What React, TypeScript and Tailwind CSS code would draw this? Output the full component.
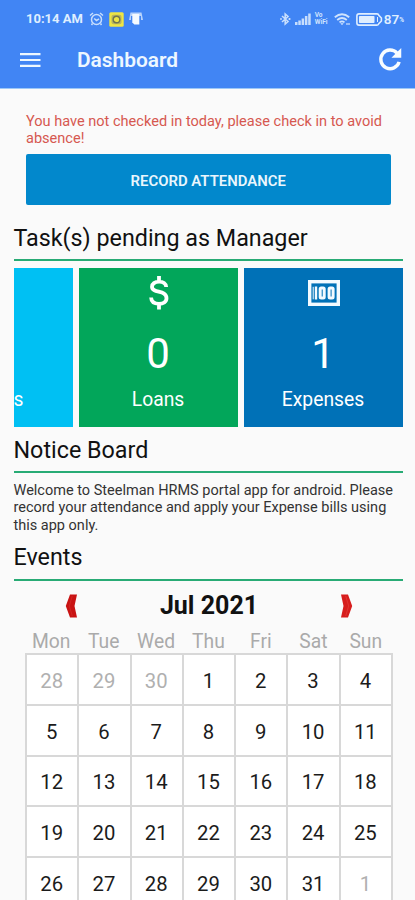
import type { ReactNode } from "react";

const days = ["Mon", "Tue", "Wed", "Thu", "Fri", "Sat", "Sun"];
const dates = [
  28, 29, 30, 1, 2, 3, 4, 5, 6, 7, 8, 9, 10, 11, 12, 13, 14, 15, 16, 17, 18, 19,
  20, 21, 22, 23, 24, 25, 26, 27, 28, 29, 30, 31, 1,
];

function StatusBar() {
  return (
    <div className="flex h-[38px] items-center pl-[26px] pr-[11px] text-[#dfeeff]">
      <span className="w-[58px] whitespace-nowrap text-[13px] font-bold">10:14 AM</span>
      <svg className="ml-[5px]" width="15" height="14" viewBox="0 0 15 14" fill="none" stroke="currentColor" strokeWidth="1.5" opacity=".85">
        <circle cx="7.5" cy="7.5" r="5" />
        <path d="M1 3.5 4 1M14 3.5 11 1M5.2 6.5 7.5 8.6 10 6.8M3.5 11.5 2.5 13M11.5 11.5l1 1.5" />
      </svg>
      <svg className="ml-[5px]" width="15" height="15" viewBox="0 0 15 15" fill="none">
        <rect x=".3" y=".3" width="14.4" height="14.4" rx="1.5" fill="#eee544" />
        <rect x="2.5" y="2.8" width="10" height="9.5" rx="2" fill="#b9b65d" />
        <circle cx="7.5" cy="7.5" r="3.3" fill="#eee544" stroke="#71764f" strokeWidth="1.4" />
      </svg>
      <svg className="ml-[5px]" width="14" height="14" viewBox="0 0 14 14" fill="currentColor">
        <path d="M1.5.5h11L14 8h-2V4H2v4H0Z" opacity=".75" />
        <path d="M3.3 2h7v10.500H5.3l-2-2Z" fill="#f4faff" />
      </svg>
      <div className="ml-auto flex items-center">
        <svg width="11" height="14" viewBox="0 0 11 14" fill="none" stroke="currentColor" strokeWidth="1.6" opacity=".85">
          <path d="m2 4 6 5.5L5.2 12V2L8 4.5 2 10" />
          <path d="M.3 7h1.4M8.6 7H10.4" strokeWidth="1.8" />
        </svg>
        <svg className="ml-[4px]" width="16" height="12" viewBox="0 0 16 12" fill="currentColor" opacity=".85">
          <path d="M0 9h2.5v3H0zM3.3 7.5h2.5V12H3.3zM6.6 5.5h2.5V12H6.6zM9.9 3h2.5v9H9.9zM13.2.5h2.5V12h-2.5z" />
        </svg>
        <span className="ml-[4px] flex w-[15px] flex-col whitespace-nowrap text-[6.5px] font-bold leading-[7px] opacity-90">
          <span>Vo</span>
          <span>WiFi</span>
        </span>
        <svg className="ml-[4px]" width="17" height="13" viewBox="0 0 17 13" fill="none" stroke="currentColor" strokeWidth="1.8" opacity=".9">
          <path d="M.8 4.3Q8 -1.8 15.2 4.3M3.2 7Q8 2.9 12.8 7M5.5 9.4Q8 7.4 10.5 9.4" />
          <path d="m6.3 10.3 1.7 2 1.7-2Z" fill="currentColor" stroke="none" />
          <path d="M13 10v2M15 10v2" strokeWidth="1.2" />
        </svg>
        <svg className="ml-[5px]" width="27" height="13" viewBox="0 0 27 13" fill="none">
          <path d="M3 .9h18q1.5 0 1.8 1.5l2.6 2.6v3l-2.6 2.6q-.3 1.5-1.8 1.5H3Q.9 12.1.9 10V3Q.9.9 3 .9Z" stroke="currentColor" strokeWidth="1.6" />
          <rect x="3" y="3" width="15.5" height="7" rx=".8" fill="currentColor" />
          <path d="M21.5 4v5" stroke="currentColor" strokeWidth="1" />
        </svg>
        <span className="ml-[1px] text-[13.5px] font-semibold">87</span>
        <span className="mt-[4px] text-[6.5px] font-bold">%</span>
      </div>
    </div>
  );
}

function SectionTitle({ children, className }: { children: ReactNode; className: string }) {
  return (
    <h2 className={`border-b-2 border-[#28ab75] text-[23.3px] leading-[29px] text-[#111] ${className}`}>
      {children}
    </h2>
  );
}

function Tile({ color, icon, count, label }: { color: string; icon: ReactNode; count: string; label: string }) {
  return (
    <div className={`flex h-[159px] w-[159px] shrink-0 flex-col items-center text-white ${color}`}>
      <div className="flex h-[50px] items-center">{icon}</div>
      <div className="h-[60px] pr-px pt-[11px] text-[42px] leading-[50px]">{count}</div>
      <div className="pr-px pt-[10px] text-[19.3px] leading-[24px]">{label}</div>
    </div>
  );
}

export default function App() {
  return (
    <div className="h-[900px] w-[415px] overflow-hidden bg-[#fafafa] font-['Roboto',sans-serif]">
      <header className="h-[89px] border-b border-[#9cc8f8] bg-[#4185f4]">
        <StatusBar />
        <div className="flex h-[44px] items-center pl-[20px] pr-[13px] text-[#edf7ff]">
          <svg width="21" height="15" viewBox="0 0 21 15" stroke="currentColor" strokeWidth="2.2">
            <path d="M0 1.2h20.5M0 7h20.5M0 12.9h20.5" />
          </svg>
          <h1 className="ml-[36px] text-[20.9px] font-semibold leading-[28px]">Dashboard</h1>
          <svg className="-mt-px ml-auto" width="24" height="25" viewBox="0 0 25 26" fill="none" stroke="#f7fcff" strokeWidth="3.6">
            <path d="M19.8 6.3A9.7 9.7 0 1 0 22 15.5" />
            <path d="M24.2 1v10.2H14Z" fill="#f7fcff" stroke="none" />
          </svg>
        </div>
      </header>

      <section className="pl-[26px] pr-[24.5px] pt-[24px]">
        <p className="whitespace-nowrap text-[14.55px] leading-[17.4px] text-[#d65850]">
          You have not checked in today, please check in to avoid
          <br />
          absence!
        </p>
        <button className="mt-[6px] block h-[51px] w-full rounded-[2px] bg-[#0288cc] pt-[3px] text-[14.9px] font-semibold text-[#e9f6fd]">
          RECORD ATTENDANCE
        </button>
      </section>

      <main className="pl-[13.5px] pr-[12px]">
        <SectionTitle className="mt-[19px] h-[37px]">Task(s) pending as Manager</SectionTitle>
        <div className="mt-[7px] flex justify-end gap-[6px] overflow-hidden">
          <div className="flex h-[159px] w-[60px] shrink-0 items-end bg-[#00c0f3] pb-[15px] pl-[0.5px] text-[19.3px] leading-[24px] text-white">
            s
          </div>
          <Tile
            color="bg-[#02a65a]"
            count="0"
            label="Loans"
            icon={
              <svg width="20" height="36" viewBox="0 0 20 36" fill="none" stroke="white" strokeWidth="3.8">
                <path d="M17.2 12C17 8.5 14 6.7 10.2 6.7C5.8 6.7 3 8.7 3 11.7C3 18.8 17.5 14.5 17.5 23.3C17.5 27 14.2 28.8 10 28.8C5.6 28.8 2.3 26.8 2.1 22.5M10 1v6M10 28v6.5" />
              </svg>
            }
          />
          <Tile
            color="bg-[#0071b7]"
            count="1"
            label="Expenses"
            icon={
              <svg width="32" height="26" viewBox="0 0 32 26" fill="none" stroke="#f2faff">
                <rect x="1.7" y="1.7" width="28.6" height="22.6" strokeWidth="3.4" />
                <path d="M5.2 6.8v12.500" strokeWidth="1" />
                <path d="M8 6.500v13" strokeWidth="2.4" />
                <rect x="12.200" y="8" width="4" height="10" rx="1" strokeWidth="3" />
                <rect x="21.100" y="8" width="4" height="10" rx="1" strokeWidth="3" />
              </svg>
            }
          />
        </div>
        <SectionTitle className="mt-[9px] h-[37px]">Notice Board</SectionTitle>
        <p className="mt-[9px] whitespace-nowrap text-[14.5px] leading-[17.4px] text-[#333]">
          Welcome to Steelman HRMS portal app for android. Please
          <br />
          record your attendance and apply your Expense bills using
          <br />
          this app only.
        </p>
        <SectionTitle className="mt-[9px] h-[38px]">Events</SectionTitle>
      </main>

      <section className="pl-[25px] pr-[22px]">
        <div className="flex h-[49px] items-center justify-between pl-[40px] pr-[40px]">
          <svg width="13" height="24" viewBox="0 0 13 24" fill="#c91313">
            <path d="M5 .5h7L9.5 12 12 23.5H5L.8 12Z" />
            <path d="m7.3 2-3 10 3 10" fill="none" stroke="#d93730" strokeWidth=".5" />
          </svg>
          <span className="text-[25px] font-bold leading-[30px] text-[#111]">Jul 2021</span>
          <svg width="13" height="24" viewBox="0 0 13 24" fill="#d71d1d">
            <path d="M8 .5H1L3.5 12 1 23.5h7L12.2 12Z" />
            <path d="m5.7 2 3 10-3 10" fill="none" stroke="#e64c44" strokeWidth=".5" />
          </svg>
        </div>
        <div className="-mb-px grid h-[24px] grid-cols-7 pr-[1px] text-center text-[19.3px] leading-[24px] text-[#aaa]">
          {days.map((day) => (
            <span key={day}>{day}</span>
          ))}
        </div>
        <div className="grid auto-rows-[50.8px] grid-cols-7 border-l-2 border-t-2 border-[#d8d8d8]">
          {dates.map((date, i) => (
            <div
              key={i}
              className={`flex items-center justify-center border-b-2 border-r-2 border-[#d8d8d8] bg-white pr-px pt-[3px] text-[20.3px] ${
                i < 3 || i === 34 ? "text-[#b0b0b0]" : "text-[#1b1b1b]"
              }`}
            >
              {date}
            </div>
          ))}
        </div>
      </section>
    </div>
  );
}
